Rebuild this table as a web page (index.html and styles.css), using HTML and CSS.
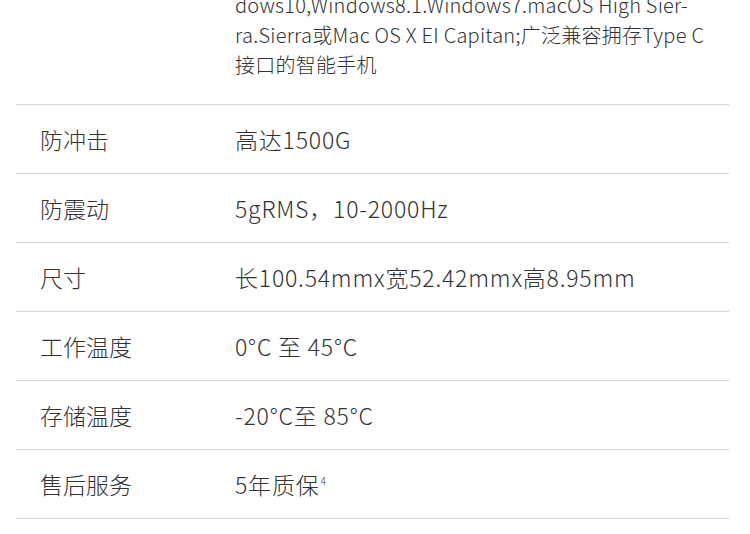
FILE: index.html
```html
<!DOCTYPE html>
<html lang="zh-CN">
<head>
<meta charset="utf-8">
<title>规格参数</title>
<link rel="stylesheet" href="styles.css">
</head>
<body>
<div class="specs">
  <div class="row row-first">
    <div class="label"></div>
    <div class="value para">dows10,Windows8.1.Windows7.macOS High Sier-<br>ra.Sierra或Mac OS X EI Capitan;广泛兼容拥存Type C<br>接口的智能手机</div>
  </div>
  <div class="row">
    <div class="label">防冲击</div>
    <div class="value">高达1500G</div>
  </div>
  <div class="row">
    <div class="label">防震动</div>
    <div class="value">5gRMS，10-2000Hz</div>
  </div>
  <div class="row">
    <div class="label">尺寸</div>
    <div class="value">长100.54mmx宽52.42mmx高8.95mm</div>
  </div>
  <div class="row">
    <div class="label">工作温度</div>
    <div class="value">0°C 至 45°C</div>
  </div>
  <div class="row">
    <div class="label">存储温度</div>
    <div class="value">-20°C至 85°C</div>
  </div>
  <div class="row">
    <div class="label">售后服务</div>
    <div class="value">5年质保<sup class="note">4</sup></div>
  </div>
</div>
</body>
</html>
```

FILE: styles.css
```css
html, body {
  margin: 0;
  padding: 0;
  background: #ffffff;
}

body {
  font-family: "Noto Sans CJK SC", "Noto Sans", sans-serif;
  font-weight: 300;
  color: #333333;
  overflow: hidden;
}

.specs {
  margin: 0 21px 0 16px;
}

.row {
  display: grid;
  grid-template-columns: 195px 1fr;
  padding: 19px 0 19px 24px;
  border-bottom: 1px solid #d6d6d6;
  font-size: 23px;
  line-height: 30px;
}

.value {
  letter-spacing: 0.8px;
}

.row-first {
  margin-top: -10px;
  padding-top: 0;
  padding-bottom: 24px;
}

.para {
  font-size: 20px;
  line-height: 30px;
  letter-spacing: 0.25px;
}

.note {
  font-size: 10px;
  line-height: 0;
  vertical-align: 9px;
  margin-left: 1px;
  letter-spacing: 0;
}
```
